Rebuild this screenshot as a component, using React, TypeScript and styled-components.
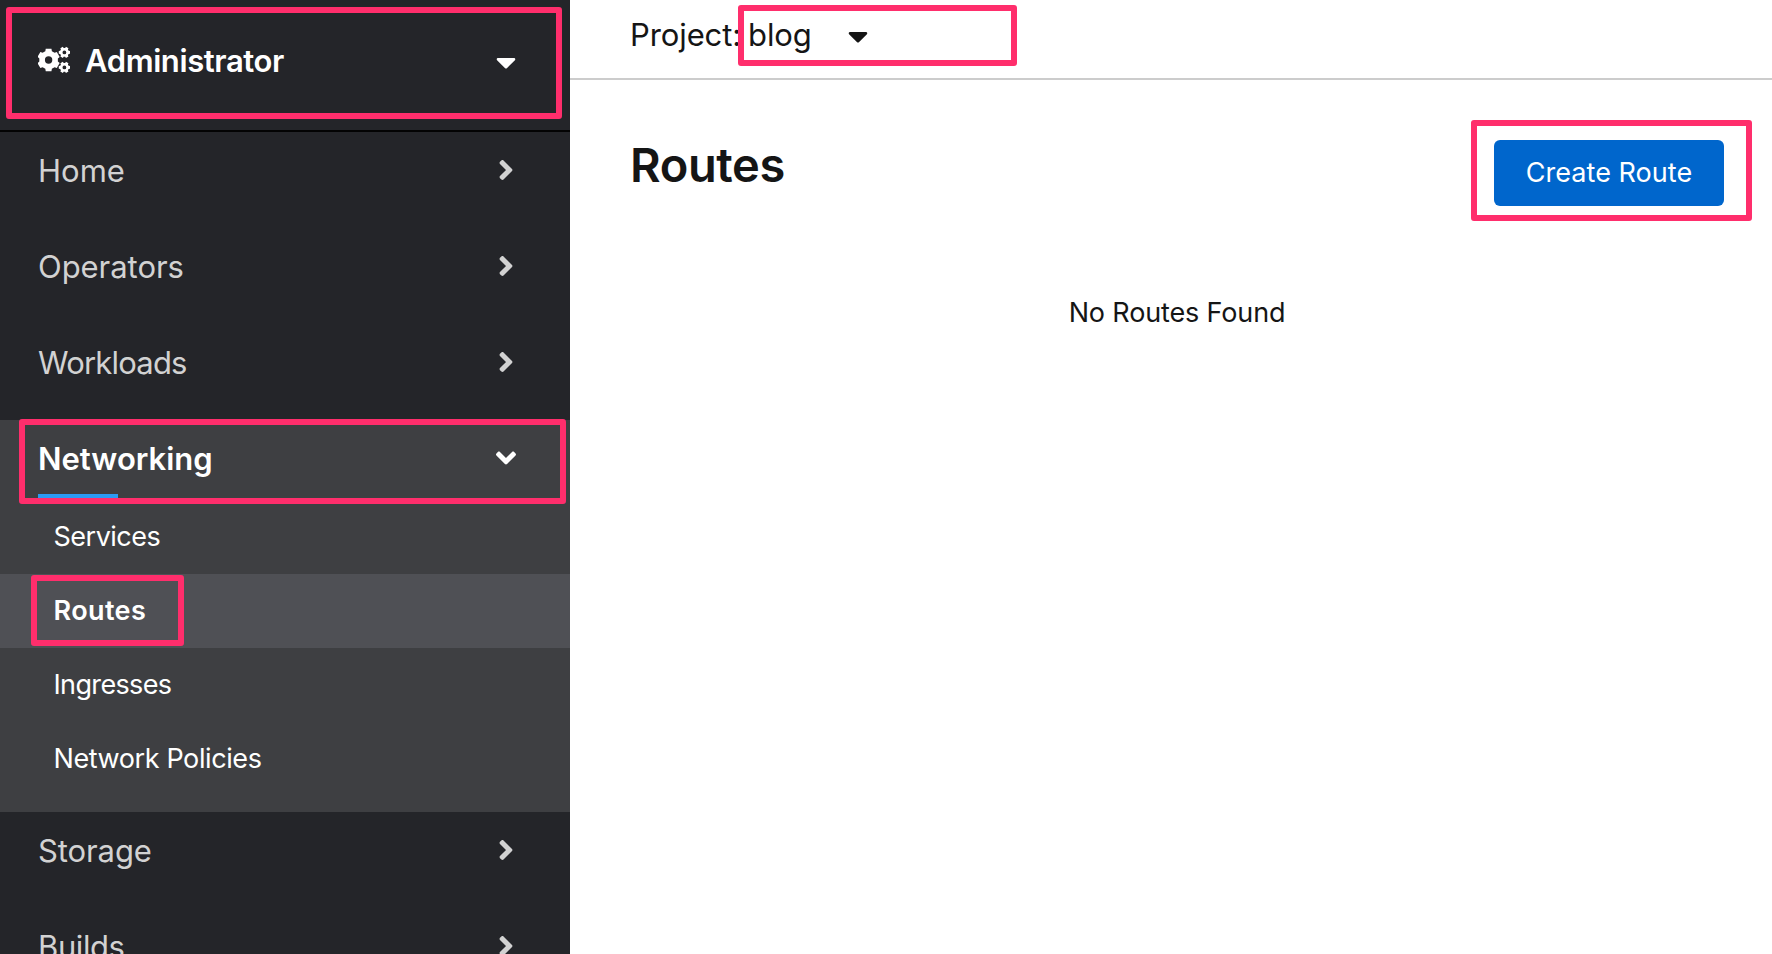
import React from "react";
import styled, { createGlobalStyle } from "styled-components";
import { FaAngleDown, FaAngleRight, FaCaretDown } from "react-icons/fa";

const GlobalStyle = createGlobalStyle`
  * { box-sizing: border-box; }
  body {
    margin: 0;
    background: #fff;
    color: #151515;
    font-family: Inter, "Liberation Sans", sans-serif;
  }
  h1, ul { margin: 0; padding: 0; }
  ul { list-style: none; }
`;

const Page = styled.div`
  display: grid;
  grid-template-columns: 570px 1fr;
  height: 954px;
  overflow: hidden;
`;

const Sidebar = styled.nav`
  height: 954px;
  overflow: hidden;
  background: #242529;
  color: #fff;
`;

/* Outline that calls attention to a control; it lies over the content. */
const Highlight = styled.span<{
  $top: number;
  $left: number;
  $width: number;
  $height: number;
}>`
  position: absolute;
  z-index: 1;
  top: ${(p) => p.$top}px;
  left: ${(p) => p.$left}px;
  width: ${(p) => p.$width}px;
  height: ${(p) => p.$height}px;
  border: 6px solid #ff2e6c;
  border-radius: 3px;
  pointer-events: none;
`;

const Perspective = styled.div`
  position: relative;
  display: flex;
  align-items: center;
  height: 132px;
  padding: 0 54px 8px 38px;
  border-bottom: 2px solid #030303;
`;

const PerspectiveIcon = styled.svg`
  width: 33px;
  height: 28px;
  margin: 0 14px 2px 0;
  fill: currentColor;
`;

const PerspectiveName = styled.span`
  flex: 1;
  font-size: 31px;
  font-weight: 600;
  letter-spacing: -0.4px;
  line-height: 40px;
`;

const Caret = styled(FaCaretDown)<{ $drop?: number }>`
  width: 20px;
  height: 32px;
  margin-top: ${(p) => p.$drop ?? 0}px;
`;

const Section = styled.li<{ $open?: boolean }>`
  height: ${(p) => (p.$open ? 392 : 96)}px;
  background: ${(p) => (p.$open ? "#3e3f42" : "transparent")};
  color: ${(p) => (p.$open ? "#fff" : "#d2d2d2")};
`;

const SectionHeader = styled.div`
  position: relative;
  display: flex;
  align-items: center;
  justify-content: space-between;
  height: 80px;
  padding: 0 48px 3px 38px;
`;

const SectionLabel = styled.span<{ $bold?: boolean; $tracking?: number }>`
  font-size: 31px;
  font-weight: ${(p) => (p.$bold ? 600 : 400)};
  letter-spacing: ${(p) => p.$tracking ?? 0}px;
  line-height: 40px;
`;

const Chevron = styled.span`
  display: flex;
  justify-content: center;
  width: 32px;
  padding-bottom: 2px;
  font-size: 32px;
`;

const ActiveBar = styled.span`
  position: absolute;
  left: 38px;
  bottom: 0;
  width: 80px;
  height: 6px;
  background: #2b9af3;
`;

const SubItem = styled.li<{ $current?: boolean; $tracking: number }>`
  position: relative;
  height: 74px;
  padding-left: 53.5px;
  background: ${(p) => (p.$current ? "#4f5055" : "transparent")};
  font-size: 27px;
  font-weight: ${(p) => (p.$current ? 600 : 400)};
  letter-spacing: ${(p) => p.$tracking}px;
  line-height: 74px;
`;

const Main = styled.main`
  display: flex;
  flex-direction: column;
`;

const ProjectBar = styled.div`
  position: relative;
  display: flex;
  align-items: center;
  height: 80px;
  padding: 0 60px 8px;
  border-bottom: 2px solid #ccc;
  font-size: 31px;
  line-height: 40px;
`;

const ProjectLabel = styled.span`
  width: 118px;
  letter-spacing: -0.1px;
`;

const ProjectName = styled.span`
  width: 100px;
  letter-spacing: -0.1px;
`;

const TitleRow = styled.div`
  display: flex;
  align-items: flex-start;
  justify-content: space-between;
  padding: 60px 48px 0 60px;
`;

const Title = styled.h1`
  font-size: 47px;
  font-weight: 600;
  letter-spacing: -0.4px;
  line-height: 50px;
`;

const CreateWrap = styled.div`
  position: relative;
`;

const CreateButton = styled.button`
  display: block;
  width: 230px;
  height: 66px;
  padding: 0;
  border: 0;
  border-radius: 6px;
  background: #0066cc;
  color: #fff;
  font: 400 27px/64px Inter, "Liberation Sans", sans-serif;
  letter-spacing: 0.05px;
`;

const EmptyMessage = styled.p`
  margin: 0;
  padding: 87px 0 0 12px;
  text-align: center;
  font-size: 27px;
  letter-spacing: -0.15px;
  line-height: 40px;
`;

/* Outline of a gear: flat-topped teeth round a body, with a round hole. */
function gear(
  cx: number,
  cy: number,
  outer: number,
  body: number,
  hole: number,
  turn: number
) {
  const step = Math.PI / 3;
  const points: string[] = [];
  for (let i = 0; i < 6; i += 1) {
    const mid = turn + i * step;
    const corners: [number, number][] = [
      [-0.34, body],
      [-0.24, outer],
      [0.24, outer],
      [0.34, body],
    ];
    corners.forEach(([offset, r]) => {
      const a = mid + offset * step;
      points.push(
        `${(cx + r * Math.cos(a)).toFixed(2)} ${(cy + r * Math.sin(a)).toFixed(2)}`
      );
    });
  }
  const ring = `M${cx - hole} ${cy}a${hole} ${hole} 0 1 0 ${2 * hole} 0a${hole} ${hole} 0 1 0 ${-2 * hole} 0z`;
  return `M${points.join("L")}z${ring}`;
}

const cogs = [
  gear(10.6, 14, 11.5, 9.4, 3.7, Math.PI / 2),
  gear(26.4, 6.4, 5.8, 4.5, 1.9, 0),
  gear(26.4, 21.4, 5.8, 4.5, 1.9, 0),
].join("");

type Item = { label: string; tracking: number };

const before: Item[] = [
  { label: "Home", tracking: 0 },
  { label: "Operators", tracking: -0.05 },
  { label: "Workloads", tracking: -0.8 },
];
const after: Item[] = [
  { label: "Storage", tracking: -0.1 },
  { label: "Builds", tracking: -0.4 },
];
const networking: Item[] = [
  { label: "Services", tracking: -0.5 },
  { label: "Routes", tracking: 0.4 },
  { label: "Ingresses", tracking: -0.65 },
  { label: "Network Policies", tracking: -0.4 },
];

function ClosedSection({ label, tracking }: Item) {
  return (
    <Section>
      <SectionHeader>
        <SectionLabel $tracking={tracking}>{label}</SectionLabel>
        <Chevron>
          <FaAngleRight />
        </Chevron>
      </SectionHeader>
    </Section>
  );
}

export default function App() {
  return (
    <Page>
      <GlobalStyle />
      <Sidebar>
        <Perspective>
          <PerspectiveIcon viewBox="0 0 33 28" aria-hidden="true">
            <path d={cogs} fillRule="evenodd" />
          </PerspectiveIcon>
          <PerspectiveName>Administrator</PerspectiveName>
          <Caret $drop={2} />
          <Highlight $top={7} $left={6} $width={556} $height={112} />
        </Perspective>
        <ul>
          {before.map((s) => (
            <ClosedSection key={s.label} {...s} />
          ))}
          <Section $open>
            <SectionHeader>
              <SectionLabel $bold $tracking={0}>
                Networking
              </SectionLabel>
              <Chevron>
                <FaAngleDown />
              </Chevron>
              <ActiveBar />
              <Highlight $top={-1} $left={19} $width={547} $height={85} />
            </SectionHeader>
            <ul>
              {networking.map((s) => (
                <SubItem
                  key={s.label}
                  $tracking={s.tracking}
                  $current={s.label === "Routes"}
                >
                  {s.label}
                  {s.label === "Routes" && (
                    <Highlight $top={1} $left={31} $width={153} $height={71} />
                  )}
                </SubItem>
              ))}
            </ul>
          </Section>
          {after.map((s) => (
            <ClosedSection key={s.label} {...s} />
          ))}
        </ul>
      </Sidebar>
      <Main>
        <ProjectBar>
          <ProjectLabel>Project:</ProjectLabel>
          <ProjectName>blog</ProjectName>
          <Caret $drop={2} />
          <Highlight $top={5} $left={168} $width={279} $height={61} />
        </ProjectBar>
        <TitleRow>
          <Title>Routes</Title>
          <CreateWrap>
            <CreateButton type="button">Create Route</CreateButton>
            <Highlight $top={-20} $left={-23} $width={281} $height={101} />
          </CreateWrap>
        </TitleRow>
        <EmptyMessage>No Routes Found</EmptyMessage>
      </Main>
    </Page>
  );
}
